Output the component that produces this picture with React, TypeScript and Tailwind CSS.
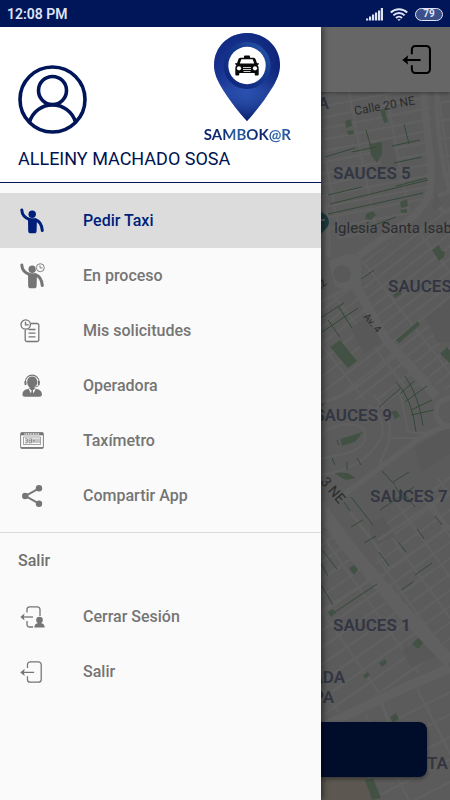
import type { ReactNode } from 'react';

const NAVY = '#001659';

function StatusBar() {
  return (
    <div className="flex h-[27px] shrink-0 items-center justify-between bg-[#001659] px-[7px] pt-px text-[#dfe4f5]">
      <span className="text-[14px] font-semibold">12:08 PM</span>
      <div className="flex items-center gap-[7px]">
        <svg width="17" height="13" viewBox="0 0 17 13" fill="currentColor" aria-hidden="true">
          <rect x="0" y="10.500" width="2.200" height="2" />
          <rect x="3" y="8.500" width="2.200" height="4" />
          <rect x="6" y="6.500" width="2.200" height="6" />
          <rect x="9" y="4.500" width="2.200" height="8" />
          <rect x="12" y="2.500" width="2.200" height="10" />
          <rect x="14.800" y="0" width="2.200" height="12.500" />
        </svg>
        <svg width="18" height="13" viewBox="0 0 18 13" fill="none" stroke="currentColor" strokeWidth="2" aria-hidden="true">
          <path d="M.8 4.500a11.800 11.800 0 0 1 16.400 0" />
          <path d="M3.400 7.400a8 8 0 0 1 11.200 0" />
          <path d="M6 10a4.300 4.300 0 0 1 6 0" />
          <path d="M7.200 11.200 9 13 10.800 11.200Z" fill="currentColor" stroke="none" />
        </svg>
        <span className="flex h-[13px] w-7 items-center justify-center rounded-full border border-[#dfe4f5] bg-[#3c4f8a] text-[10px] leading-none font-bold">
          79
        </span>
      </div>
    </div>
  );
}

function ExitIcon({ size, stroke }: { size: number; stroke: number }) {
  return (
    <svg width={size} height={size} viewBox="0 0 28 28" fill="none" stroke="currentColor" strokeWidth={stroke} aria-hidden="true">
      <path d="M9.500 9V4.500A3.500 3.500 0 0 1 13 1h10.500A3.500 3.500 0 0 1 27 4.500v19a3.500 3.500 0 0 1-3.500 3.500H13a3.500 3.500 0 0 1-3.500-3.500V19.500" />
      <path d="M3 14.500h15" />
      <path d="M.3 14.500 6 10 5 14.500 6 19Z" fill="currentColor" stroke="none" />
    </svg>
  );
}

function SignOutIcon() {
  return (
    <svg width="25" height="22" viewBox="0 0 25 22" aria-hidden="true">
      <g fill="none" stroke="currentColor" strokeWidth="1.300">
        <path d="M7 6.500V3.500A2.700 2.700 0 0 1 9.700.8h7.600A2.700 2.700 0 0 1 20 3.500V10M7 15v3.500A2.500 2.500 0 0 0 9.500 21H13" />
        <path d="M2 11h11" />
      </g>
      <path d="M.3 11 4.500 7.500 3.800 11l.7 3.500Z" fill="currentColor" />
      <circle cx="19.500" cy="14" r="3.300" fill="currentColor" />
      <path d="M14.300 21.500c0-2.600 1.800-4.300 3.800-4.500h2.800c2 .2 3.800 1.900 3.800 4.500Z" fill="currentColor" />
    </svg>
  );
}

function HailIcon({ clock = false }: { clock?: boolean }) {
  return (
    <svg width="25" height="26" viewBox="0 0 25 26" fill="none" stroke="currentColor" aria-hidden="true">
      <path d="M1.800 2C2 6.500 4 9.500 9.500 11.500" strokeWidth="3" strokeLinecap="round" />
      <path d="M15.500 12c4.300 1 6.200 4.500 6.800 10.500" strokeWidth="3" strokeLinecap="round" />
      <circle cx="12.200" cy="6.200" r="3.700" fill="currentColor" stroke="none" />
      <path d="M8 10.200h8.500l.4 3.800-.3 9c0 1.400-.9 2.300-2.200 2.300h-4c-1.300 0-2.100-.9-2.200-2.300Z" fill="currentColor" stroke="none" />
      {clock && (
        <>
          <circle cx="20.300" cy="4.700" r="4.900" fill="#fafafa" stroke="none" />
          <circle cx="20.300" cy="4.700" r="4" strokeWidth=".9" />
          <path d="M20 2.300v2.600h2.600" strokeWidth=".9" />
        </>
      )}
    </svg>
  );
}

function RequestsIcon() {
  return (
    <svg width="20" height="24" viewBox="0 0 20 24" fill="none" stroke="currentColor" strokeWidth="1.300" aria-hidden="true">
      <path d="M11 4.500h6a1.800 1.800 0 0 1 1.800 1.800v14.400a1.800 1.800 0 0 1-1.800 1.800H7a1.800 1.800 0 0 1-1.800-1.800V11" />
      <circle cx="5.700" cy="5.500" r="4.700" />
      <path d="M5.500 2.700v3.100h3.200M8.500 10.500h7M8.500 14.200h7M8.500 17.900h7" />
    </svg>
  );
}

function OperatorIcon() {
  return (
    <svg width="24" height="24" viewBox="0 0 24 24" aria-hidden="true">
      <path d="M5.300 9V8a6.900 6.900 0 0 1 13.800 0v1" fill="none" stroke="currentColor" strokeWidth="1.100" />
      <rect x="4.500" y="6.800" width="2" height="4.500" rx="1" fill="currentColor" />
      <rect x="17.800" y="6.800" width="2" height="4.500" rx="1" fill="currentColor" />
      <path d="M7.200 8c0-3.200 2-5.400 5-5.400s5 2.200 5 5.400c0 3.400-2.100 6.400-5 6.400S7.200 11.400 7.200 8Z" fill="currentColor" />
      <path d="M18.800 11c-.6 1.500-1.800 2-4.600 2" fill="none" stroke="#fafafa" strokeWidth="1.800" />
      <path d="M18.800 11c-.6 1.300-1.800 1.800-5 1.800" fill="none" stroke="currentColor" strokeWidth=".9" />
      <path d="M10 12.500h4.400l.3 2c3.700.8 6.700 1.800 7.200 5 .2 2.300-.6 3.300-2.300 3.300H4.800c-1.700 0-2.500-1-2.300-3.300.5-3.200 3.500-4.200 7.200-5Z" fill="currentColor" />
      <path d="m9.600 14.800 2 1.800-.6 3-2.200-4.400Zm5.200 0-2 1.800.6 3 2.200-4.400Z" fill="#fafafa" />
    </svg>
  );
}

function MeterIcon() {
  return (
    <svg width="24" height="17" viewBox="0 0 24 17" fill="none" stroke="currentColor" aria-hidden="true">
      <rect x=".6" y=".6" width="22.800" height="15.800" rx="1" strokeWidth=".9" />
      <path d="M1 2h22" strokeWidth="2.600" />
      <path d="M4.500 2h15" stroke="#fafafa" strokeWidth="1.600" strokeDasharray="1 .7" />
      <path d="M1 15.700h22" strokeWidth="1.300" />
      <g strokeWidth=".8">
        <path d="M3.500 5h17v7.500h-17z" strokeOpacity=".8" />
        <path d="M5 6.800h2.300v4H5M5.300 8.800h2M9 6.600v4.200h2.500V6.800H9.700M9 8.800h2.500M13 6.600v4.400M15 6.600v4.400M13 8.800h2M17 6.600v4.400M19 6.600v4.400" />
      </g>
    </svg>
  );
}

function ShareIcon() {
  return (
    <svg width="24" height="24" viewBox="0 0 24 24" fill="currentColor" aria-hidden="true">
      <path d="M19 4.300 5.500 12 19 19.700" fill="none" stroke="currentColor" strokeWidth="2" />
      <circle cx="19" cy="4.200" r="3.200" />
      <circle cx="5.200" cy="12" r="3.200" />
      <circle cx="19" cy="19.800" r="3.200" />
    </svg>
  );
}

function Avatar() {
  return (
    <svg width="69" height="69" viewBox="0 0 69 69" fill="none" stroke={NAVY} strokeWidth="3.600" role="img" aria-label="Perfil">
      <circle cx="34.500" cy="34.500" r="32.500" />
      <circle cx="34.500" cy="25.500" r="14" />
      <path d="M11.500 57a24 24 0 0 1 46 0" />
    </svg>
  );
}

function Logo() {
  return (
    <div className="flex flex-col items-center">
      <svg width="67" height="88" viewBox="0 0 67 88" aria-hidden="true">
        <defs>
          <linearGradient id="pin" x1="0" y1="0" x2="1" y2="0">
            <stop offset="0" stopColor="#16308e" />
            <stop offset=".5" stopColor="#2448a8" />
            <stop offset="1" stopColor="#0e2478" />
          </linearGradient>
          <linearGradient id="tip" x1="0" y1="0" x2="0" y2="1">
            <stop offset="0" stopColor="#0b2074" stopOpacity=".7" />
            <stop offset=".4" stopColor="#0b2074" stopOpacity=".1" />
            <stop offset=".65" stopColor="#3a66c4" stopOpacity=".3" />
            <stop offset="1" stopColor="#061a66" />
          </linearGradient>
          <linearGradient id="ring" x1="0" y1="1" x2="1" y2="0">
            <stop offset="0" stopColor="#0d2277" />
            <stop offset=".6" stopColor="#153a90" />
            <stop offset="1" stopColor="#2c5cab" />
          </linearGradient>
        </defs>
        <path d="M33 0C14.500 0 0 14 0 32c0 8 3 14.500 7 21.500C14 65 24 78.500 33 88c9-9.500 19-23 26-34.500 4-7 7-13.500 7-21.500C66 14 51.500 0 33 0Z" fill="url(#pin)" />
        <path d="M33 0C14.500 0 0 14 0 32c0 8 3 14.500 7 21.500C14 65 24 78.500 33 88c9-9.500 19-23 26-34.500 4-7 7-13.500 7-21.500C66 14 51.500 0 33 0Z" fill="url(#tip)" />
        <circle cx="33" cy="32.500" r="23.500" fill="url(#ring)" />
        <circle cx="33" cy="32.500" r="18.700" fill="#fff" />
        <g fill="#0a0a0a">
          <rect x="30" y="22.500" width="6" height="3" rx=".8" />
          <path d="M26.500 24.800h13c1.200 0 1.800.8 2.200 1.800l1.300 3.700 1.700-.3v1.500l-1.200.6c.8.9 1.200 2 1.200 3.400V41c0 1-.5 1.500-1.300 1.500H42c-.8 0-1.300-.5-1.300-1.500v-1H25.300v1c0 1-.5 1.500-1.300 1.500h-1.400c-.8 0-1.300-.5-1.300-1.500v-5.500c0-1.400.4-2.500 1.200-3.400l-1.200-.6V30l1.700.3 1.300-3.700c.4-1 1-1.800 2.200-1.800Z" />
        </g>
        <path d="M27.300 26.300h11.400l1.500 4.200H25.800Z" fill="#fff" />
        <circle cx="25" cy="35.300" r="2.100" fill="#fff" />
        <circle cx="41" cy="35.300" r="2.100" fill="#fff" />
        <path d="M29 34.500h8M29 36.500h8M29.500 38.500h7" stroke="#fff" strokeWidth=".8" />
      </svg>
      <span className="mt-px bg-[linear-gradient(90deg,#0d226b_0%,#0f2a70_22%,#2f62a8_36%,#1c4892_50%,#0d226b_62%,#122f78_72%,#3570b4_82%,#1d4a90_100%)] bg-clip-text font-[Lato,sans-serif] text-[15px] leading-6 font-bold text-transparent">
        SAMBOK@R
      </span>
    </div>
  );
}

function MenuItem({ icon, label, active = false }: { icon: ReactNode; label: string; active?: boolean }) {
  return (
    <li>
      <button
        type="button"
        className={
          active
            ? 'flex h-[55px] w-full items-center bg-[#dcdcdc] pl-5 text-left text-[#001f7a]'
            : 'flex h-[55px] w-full items-center pl-5 text-left text-[#757575]'
        }
      >
        <span className="flex w-[63px] items-center">{icon}</span>
        <span className="text-[16px] font-medium">{label}</span>
      </button>
    </li>
  );
}

function Drawer() {
  return (
    <aside className="absolute inset-y-0 left-0 flex w-[321px] flex-col bg-[#fafafa] shadow-[2px_0_6px_rgba(0,0,0,0.5)]">
      <header className="border-b border-[#001659] bg-white px-[18px] pt-1.5">
        <div className="flex items-start justify-between">
          <div className="pt-8">
            <Avatar />
          </div>
          <div className="pr-3">
            <Logo />
          </div>
        </div>
        <p className="pt-0.5 pb-3 text-[18px] leading-[22px] text-[#001250]">ALLEINY MACHADO SOSA</p>
      </header>
      <nav aria-label="Principal">
        <ul className="border-b border-[#dcdcdc] pt-[10px] pb-[9px]">
          <MenuItem active icon={<HailIcon />} label="Pedir Taxi" />
          <MenuItem icon={<HailIcon clock />} label="En proceso" />
          <MenuItem icon={<RequestsIcon />} label="Mis solicitudes" />
          <MenuItem icon={<OperatorIcon />} label="Operadora" />
          <MenuItem icon={<MeterIcon />} label="Taxímetro" />
          <MenuItem icon={<ShareIcon />} label="Compartir App" />
        </ul>
        <h2 className="flex h-14 items-center pl-[18px] text-[16px] font-medium text-[#707070]">Salir</h2>
        <ul>
          <MenuItem icon={<SignOutIcon />} label="Cerrar Sesión" />
          <MenuItem icon={<ExitIcon size={22} stroke={1.6} />} label="Salir" />
        </ul>
      </nav>
    </aside>
  );
}

const blocks: { id: string; w: number; h: number; angle: number; area: string }[] = [
  { id: 'north', w: 36, h: 11, angle: -11, area: '320,92 430,92 432,195 405,216 345,243 320,225' },
  { id: 'east', w: 62, h: 10, angle: -38, area: '362,262 450,203 450,392 436,386 388,336 362,286' },
  { id: 'northeast', w: 30, h: 18, angle: -8, area: '438,92 450,92 450,195 440,170' },
  { id: 'west', w: 40, h: 13, angle: -38, area: '320,302 352,288 382,340 420,385 380,400 320,400' },
  { id: 'south', w: 24, h: 13, angle: -36, area: '380,520 400,500 450,470 450,648 425,630 375,570' },
  { id: 'southwest', w: 44, h: 14, angle: -35, area: '320,520 370,572 420,635 446,658 400,684 320,720' },
  { id: 'bottom', w: 58, h: 20, angle: -27, area: '320,735 400,698 450,672 450,800 320,800' },
];

const places: { x: number; y: number; text: string; end?: boolean }[] = [
  { x: 329, y: 109, text: 'A', end: true },
  { x: 333, y: 179, text: 'SAUCES 5' },
  { x: 388, y: 292, text: 'SAUCES' },
  { x: 392, y: 421, text: 'SAUCES 9', end: true },
  { x: 370, y: 502, text: 'SAUCES 7' },
  { x: 333, y: 631, text: 'SAUCES 1' },
  { x: 345, y: 683, text: 'ADA', end: true },
  { x: 334, y: 703, text: 'PA', end: true },
  { x: 427, y: 769, text: 'TA' },
];

function StreetMap() {
  return (
    <svg className="absolute inset-0 h-full w-full" viewBox="0 92 450 708" preserveAspectRatio="xMaxYMin slice" role="img" aria-label="Mapa">
      <defs>
        {blocks.map((b) => (
          <pattern key={b.id} id={b.id} width={b.w} height={b.h} patternUnits="userSpaceOnUse" patternTransform={`rotate(${b.angle})`}>
            <path d={`M0 1H${b.w}M1 0V${b.h}`} stroke="#f1f1f1" strokeWidth="1.800" />
          </pattern>
        ))}
      </defs>
      <rect x="0" y="92" width="450" height="708" fill="#e4e4e4" />
      {blocks.map((b) => (
        <polygon key={b.id} points={b.area} fill={`url(#${b.id})`} />
      ))}
      <g fill="#dcdcdc">
        <path d="M425 318l25-20v45l-12 0ZM350 328l20-12 16 24-22 14ZM414 448l36-22v28l-28 18ZM369 524l14-8 12 20-22 12ZM402 650l22-12 12 18-24 12ZM376 142l16-3 6 28-16 3Z" />
      </g>
      <path d="M320 780l45-10 10 30h-55Z" fill="#e6dccb" />
      <g fill="#a9cbaa">
        <path d="M369 144l13-2v12l-5 9-6-8Z" />
        <path d="M380 110l5-1 3 13-4 1ZM345 121l6-2 1 7-6 2ZM347 131l6-1 1 4-6 1Z" />
        <path d="M400 202l7-3 1 7-7 2ZM366 214l7-3 3 4-5 5-6-1ZM400 210l7-1v4h-6Z" />
        <path d="M432 250l7-5 2 5 4 2-1 5-5 4-3-5ZM393 295l6-4 3 3-7 4Z" />
        <path d="M396 340l22-19 2 4-20 17Z" />
        <path d="M330 347l10-7 17 21-9 7ZM396 340l5-4 3 3-5 4ZM440 354l7-7 5 6v12Z" />
        <path d="M340 439l23-7-8 10-13 4ZM333 472l15 1 8 5-10 2-6-3ZM391 412l5-2 4 6-5 3Z" />
        <path d="M320 400l6 2-4 5ZM349 568l5-3 4 5-4 5ZM328 612l5-3 3 4-5 4Z" />
        <path d="M412 644l6-6 6 4-6 7ZM379 663l6-4 2 4-5 4ZM363 675l5-3 2 3-5 4Z" />
        <path d="M390 717l6-4 3 6-6 4ZM365 780l8-2 8 20-9 2Z" />
      </g>
      <g stroke="#f1f1f1" fill="none">
        <path d="M424 92C424 125 434 160 430 190C425 216 395 228 358 256" strokeWidth="7" />
        <path d="M436 92q2 60 14 100M433 198l17-7M437 205q6 8 13 6" strokeWidth="4" />
        <path d="M322 195q8 30 6 62" strokeWidth="5" />
        <path d="M330 262q26-14 30 0v26q-10 2-24-2Z" fill="#f1f1f1" strokeWidth="2" />
        <path d="M356 258v28L386 340 436 396" strokeWidth="9" />
        <path d="M386 338 430 384" strokeWidth="5" />
        <circle cx="450" cy="412" r="14" strokeWidth="5" />
        <path d="M450 426q-18 2-45 23L345 494" strokeWidth="5" />
        <path d="M320 302l30-15M320 402q25-2 65-38l12-10" strokeWidth="3" />
        <path d="M320 435q22-17 42-8 12 18-18 27l-24 5M320 475q44-5 62-38 4-20-14-32M373 395q24 24 14 52l-8 18M370 412l30-20 8 40 28 2M388 438h28" strokeWidth="2" />
        <path d="M318 505 345 543 400 608 450 662" strokeWidth="13" />
        <path d="M388 570l62-44M350 512l28 36 10 20M378 540l72-48M428 500l22 30" strokeWidth="3" />
        <path d="M450 668l-42 18-88 42" strokeWidth="9" />
        <path d="M382 704l8 22M320 612l60-38" strokeWidth="3" />
      </g>
      <circle cx="342" cy="274" r="9" fill="#dedede" />
      <path d="M431 206l5-14 6 13-6 5Z" fill="#dcdcdc" />
      <g stroke="#7fb488" strokeWidth="1" fill="none">
        <path d="M325 157l30-9M352 152l24-5M392 146l28-6M330 204l98-24M328 214l95-21M328 195l34-8M396 186l31-8M372 226l24-9M394 163l28-6M404 124l5 20M366 130l4 14" />
        <path d="M361 279l13-9M320 318l24-15M322 332l36-24M338 306l14 22M328 320l12 17" />
        <path d="M396 382q16 16 20 50M405 376q14 20 18 50M400 394l14-13M405 402l22-16M411 410l21-10M411 415l23-5M379 407l21-18" />
        <path d="M332 458l3 7M347 462v8M357 458l4 7M320 463v4M337 440l2 5" />
        <path d="M382 471l13 14M393 482l16-10M395 486l10 15M380 510l34-23M400 489l15 18M344 502l6 9M351 497l22 28M351 527l12-7M364 543l12-7M417 529l7 10M435 516l7 9M399 543l7 9M379 552l10 14" />
        <path d="M401 590l12-8M415 575l17-12M323 551l14 18M320 562l8 14M321 585l12 20M335 612l42-28" />
      </g>
      <path d="M318 239c-3-8-9-10-9-17a10 10 0 0 1 20 0c0 7-8 9-11 17Z" fill="#4a929c" />
      <path d="M317 220h8" stroke="#dce9ec" strokeWidth="2" />
      <g fill="#8088a6" fontWeight="600" fontSize="17">
        {places.map((p) => (
          <text key={`${p.x}-${p.y}`} x={p.x} y={p.y} textAnchor={p.end ? 'end' : 'start'}>
            {p.text}
          </text>
        ))}
      </g>
      <g fill="#6a6f74">
        <text x="334" y="233" fontSize="15">Iglesia Santa Isab</text>
        <text x="355" y="115" fontSize="12" transform="rotate(-10 355 115)">Calle 20 NE</text>
        <text x="363" y="317" fontSize="10" transform="rotate(50 363 317)">Av. 4</text>
        <text x="320" y="482" fontSize="14" transform="rotate(50 320 482)">3 NE</text>
        <text x="316" y="294" fontSize="12" transform="rotate(-42 316 294)">uiz</text>
      </g>
    </svg>
  );
}

export default function App() {
  return (
    <div className="flex min-h-screen flex-col font-[Roboto,sans-serif]">
      <StatusBar />
      <div className="relative flex flex-1 flex-col overflow-hidden">
        <div className="z-10 flex h-[65px] shrink-0 items-center justify-end bg-white pr-[19px] shadow-[0_1px_4px_rgba(0,0,0,0.4)]">
          <button type="button" aria-label="Salir" className="text-black">
            <ExitIcon size={29} stroke={2} />
          </button>
        </div>
        <main className="relative flex-1">
          <StreetMap />
          <button
            type="button"
            aria-label="Pedir Taxi"
            className="absolute inset-x-[23px] bottom-[23px] h-[55px] rounded-lg bg-[#002169] shadow-[0_2px_4px_rgba(0,0,0,0.4)]"
          />
        </main>
        <div className="absolute inset-0 z-20 bg-black/60">
          <Drawer />
        </div>
      </div>
    </div>
  );
}
